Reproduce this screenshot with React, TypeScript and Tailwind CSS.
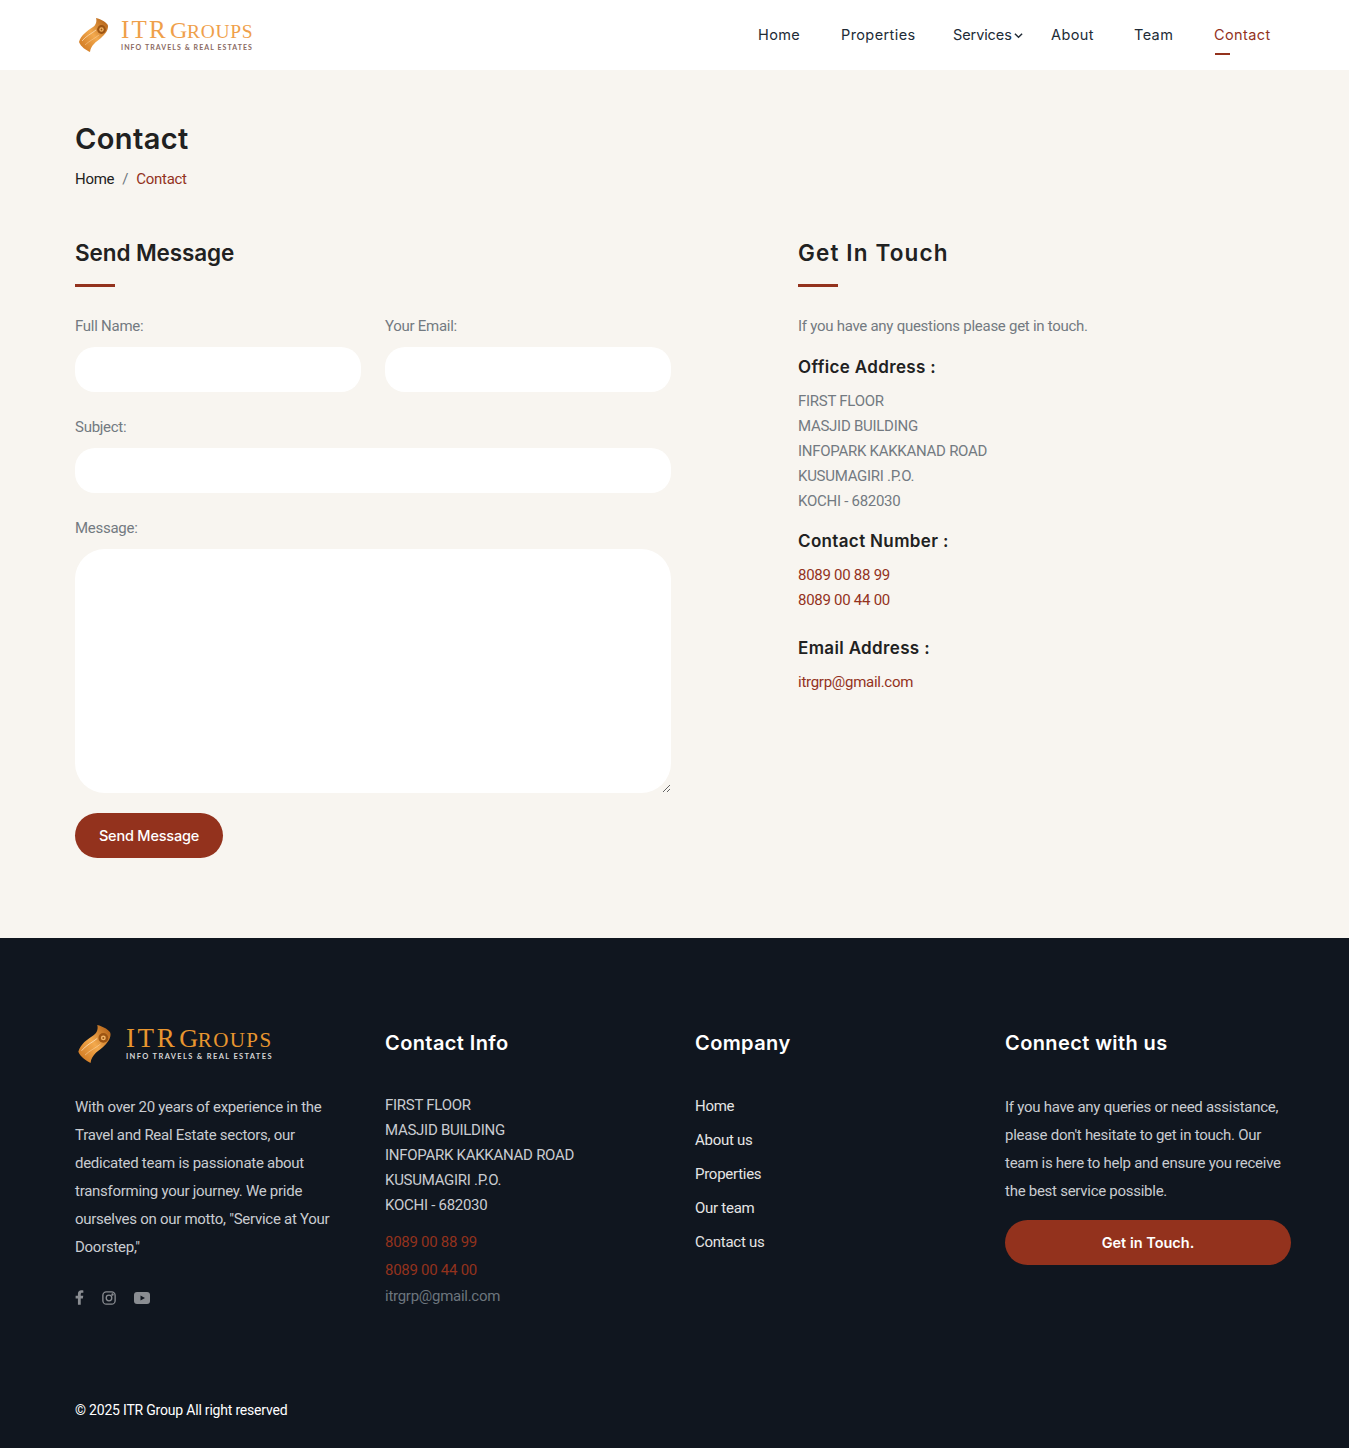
import React from "react";

const head = "font-['Inter','Lato',sans-serif]";

function Swoosh({ id, className }: { id: string; className: string }) {
  return (
    <svg viewBox="0 0 30 36" className={className}>
      <defs>
        <linearGradient id={id} x1="0" y1="1" x2="1" y2="0">
          <stop offset="0" stopColor="#c9701a" />
          <stop offset="0.5" stopColor="#f3a94d" />
          <stop offset="1" stopColor="#a9570f" />
        </linearGradient>
      </defs>
      <path d="M17 1 C22 2 29 6 29 9 C29 14 26 17 22 21 C17 25 12 28 11 35 C7 33 2 30 0 25 C2 18 8 14 14 10 C17 8 18 4 17 1 Z" fill={`url(#${id})`} />
      <path d="M3 24 C7 19 12 17 17 13" stroke="#ffe3bd" strokeWidth="0.9" fill="none" opacity="0.8" />
      <path d="M6 28 C10 24 15 22 20 18" stroke="#ffe3bd" strokeWidth="0.7" fill="none" opacity="0.6" />
      <circle cx="22.5" cy="12.5" r="4.4" fill="#9c5412" />
      <circle cx="22.5" cy="12.5" r="2.2" fill="#f2b566" />
      <circle cx="22.5" cy="12.5" r="0.9" fill="#9c5412" />
    </svg>
  );
}

function Logo({ dark }: { dark?: boolean }) {
  return (
    <div className="flex items-center ml-[3px]">
      <Swoosh id={dark ? "sw-dark" : "sw-light"} className={dark ? "w-[34px] h-[40px]" : "w-[32px] h-[36px]"} />
      <div className={dark ? "ml-[14px]" : "ml-[11px]"}>
        <div className={`font-['Liberation_Serif',serif] whitespace-nowrap flex items-baseline ${dark ? "text-[#e9962f] h-[24px] leading-[24px]" : "text-[#efa04a] h-[22px] leading-[22px]"}`}>
          <span className={dark ? "text-[27px] tracking-[2.6px]" : "text-[25px] tracking-[2.2px]"}>ITR</span>
          <span className={dark ? "ml-[2px] text-[26px]" : "ml-[2px] text-[24px]"}>G</span>
          <span className={dark ? "text-[21px] tracking-[1.4px]" : "text-[19.5px] tracking-[0.7px]"}>ROUPS</span>
        </div>
        <div className={`font-['Lato',sans-serif] font-bold whitespace-nowrap ${dark ? "mt-[2px] text-[7.5px] tracking-[1.35px] text-[#d5d5d5] leading-[10px]" : "mt-[1px] text-[7px] tracking-[1.07px] text-[#8a6a62] leading-[10px]"}`}>
          INFO TRAVELS &amp; REAL ESTATES
        </div>
      </div>
    </div>
  );
}

function Heading({ children, wide }: { children: React.ReactNode; wide?: boolean }) {
  return (
    <div>
      <h2 className={`${head} text-[22.5px] font-semibold leading-[30px] text-[#212121] ${wide ? "tracking-[1.15px]" : "tracking-[-0.1px]"}`}>{children}</h2>
      <div className="mt-[16px] w-[40px] h-[3px] bg-[#93321d]" />
    </div>
  );
}

function Label({ children }: { children: React.ReactNode }) {
  return <label className="block text-[15px] leading-[22px] text-[#737a81]">{children}</label>;
}

function Sub({ children }: { children: React.ReactNode }) {
  return <h3 className={`${head} text-[17px] font-semibold leading-[22px] tracking-[0.35px] text-[#212121]`}>{children}</h3>;
}

function FootTitle({ children }: { children: React.ReactNode }) {
  return <h4 className={`${head} text-[20px] font-semibold leading-[40px] tracking-[0.4px] text-white`}>{children}</h4>;
}

export default function App() {
  return (
    <div className="min-h-[1448px] bg-[#f8f5f0] font-['Roboto',sans-serif] text-[15px] tracking-[-0.27px]">
      <header className="h-[70px] bg-white px-[75px] flex items-center justify-between">
        <Logo />
        <nav className={`${head} flex items-center text-[14.5px] text-[#212b36] mr-[3px] tracking-[0.4px]`}>
          <a className="w-[83px]">Home</a>
          <a className="w-[112px]">Properties</a>
          <a className="w-[98px] flex items-center gap-[2px] tracking-[-0.1px]">
            Services
            <svg viewBox="0 0 10 10" className="w-[9px] h-[9px]" fill="none" stroke="currentColor" strokeWidth="1.6">
              <path d="M1 3 L5 7 L9 3" />
            </svg>
          </a>
          <a className="w-[83px]">About</a>
          <a className="w-[80px]">Team</a>
          <a className="relative w-[57px] whitespace-nowrap text-[#93321d]">
            Contact
            <span className="absolute left-[1px] top-[29px] w-[15px] h-[2px] bg-[#93321d]" />
          </a>
        </nav>
      </header>

      <main className="px-[75px] pt-[51px] pb-[80px]">
        <h1 className={`${head} text-[29px] font-semibold leading-[36px] tracking-[0.4px] text-[#212121]`}>Contact</h1>
        <div className="mt-[11px] leading-[22px] flex text-[#212121]">
          <span>Home</span>
          <span className="mx-[8px] text-[#6c757d]">/</span>
          <span className="text-[#93321d]">Contact</span>
        </div>

        <div className="mt-[48px] flex">
          <form className="w-[596px] shrink-0">
            <Heading>Send Message</Heading>
            <div className="mt-[28px] grid grid-cols-2 gap-x-[24px]">
              <div>
                <Label>Full Name:</Label>
                <input className="mt-[10px] block w-full h-[45px] rounded-[20px] bg-white outline-none" />
              </div>
              <div>
                <Label>Your Email:</Label>
                <input className="mt-[10px] block w-full h-[45px] rounded-[20px] bg-white outline-none" />
              </div>
            </div>
            <div className="mt-[24px]">
              <Label>Subject:</Label>
              <input className="mt-[10px] block w-full h-[45px] rounded-[20px] bg-white outline-none" />
            </div>
            <div className="mt-[24px]">
              <Label>Message:</Label>
              <textarea className="mt-[10px] block w-full h-[244px] rounded-[30px] bg-white outline-none" />
            </div>
            <button type="button" className={`${head} mt-[20px] block w-[148px] h-[45px] rounded-full bg-[#93321d] text-white text-[14.5px] font-medium tracking-[-0.2px]`}>
              Send Message
            </button>
          </form>

          <aside className="ml-[127px] text-[#737a81]">
            <Heading wide>Get In Touch</Heading>
            <p className="mt-[28px] leading-[22px]">If you have any questions please get in touch.</p>
            <div className="mt-[19px]"><Sub>Office Address :</Sub></div>
            <div className="mt-[11px] leading-[25px]">
              <div>FIRST FLOOR</div>
              <div>MASJID BUILDING</div>
              <div>INFOPARK KAKKANAD ROAD</div>
              <div>KUSUMAGIRI .P.O.</div>
              <div>KOCHI - 682030</div>
            </div>
            <div className="mt-[16px]"><Sub>Contact Number :</Sub></div>
            <div className="mt-[11px] leading-[25px] text-[#93321d]">
              <div>8089 00 88 99</div>
              <div>8089 00 44 00</div>
            </div>
            <div className="mt-[24px]"><Sub>Email Address :</Sub></div>
            <div className="mt-[11px] leading-[25px] text-[#93321d]">itrgrp@gmail.com</div>
          </aside>
        </div>
      </main>

      <footer className="bg-[#10161f] px-[75px] pt-[85px] h-[510px] text-[#c9ccd1]">
        <div className="grid grid-cols-[286px_286px_286px_286px] gap-x-[24px]">
          <div>
            <div className="mt-[1px]"><Logo dark /></div>
            <p className="mt-[29px] leading-[28px]">
              With over 20 years of experience in the Travel and Real Estate sectors, our dedicated team is passionate about transforming your journey. We pride ourselves on our motto, "Service at Your Doorstep,"
            </p>
            <div className="mt-[29px] flex items-center text-[#8a8d92]">
              <svg viewBox="0 0 320 512" className="w-[9px] h-[15px]" fill="currentColor">
                <path d="M279 288l14-93h-89v-60c0-25 12-50 52-50h41V6s-37-6-72-6c-73 0-121 44-121 125v70H22v93h82v224h100V288z" />
              </svg>
              <svg viewBox="0 0 16 16" className="ml-[18px] w-[14px] h-[14px]" fill="none" stroke="currentColor" strokeWidth="1.5">
                <rect x="1" y="1" width="14" height="14" rx="4" />
                <circle cx="8" cy="8" r="3.2" />
                <circle cx="12" cy="4" r="0.6" fill="currentColor" />
              </svg>
              <svg viewBox="0 0 16 12" className="ml-[18px] w-[16px] h-[12px]">
                <rect width="16" height="12" rx="3" fill="currentColor" />
                <path d="M6.5 3.5 L11 6 L6.5 8.5 Z" fill="#10161f" />
              </svg>
            </div>
          </div>

          <div>
            <FootTitle>Contact Info</FootTitle>
            <div className="mt-[30px] leading-[25px]">
              <div>FIRST FLOOR</div>
              <div>MASJID BUILDING</div>
              <div>INFOPARK KAKKANAD ROAD</div>
              <div>KUSUMAGIRI .P.O.</div>
              <div>KOCHI - 682030</div>
            </div>
            <div className="mt-[10px] leading-[28px] text-[#93321d]">
              <div>8089 00 88 99</div>
              <div>8089 00 44 00</div>
            </div>
            <div className="leading-[24px] text-[#6c757d]">itrgrp@gmail.com</div>
          </div>

          <div>
            <FootTitle>Company</FootTitle>
            <ul className="mt-[26px] text-[#e5e5e5] leading-[34px]">
              <li>Home</li>
              <li>About us</li>
              <li>Properties</li>
              <li>Our team</li>
              <li>Contact us</li>
            </ul>
          </div>

          <div>
            <FootTitle>Connect with us</FootTitle>
            <p className="mt-[30px] leading-[28px]">
              If you have any queries or need assistance, please don't hesitate to get in touch. Our team is here to help and ensure you receive the best service possible.
            </p>
            <button type="button" className={`${head} mt-[15px] block w-full h-[45px] rounded-full bg-[#93321d] text-white text-[14.5px] font-semibold tracking-[0px]`}>
              Get in Touch.
            </button>
          </div>
        </div>
        <div className="mt-[92px] text-[14px] leading-[20px] tracking-[-0.2px] text-white">© 2025 ITR Group All right reserved</div>
      </footer>
    </div>
  );
}
